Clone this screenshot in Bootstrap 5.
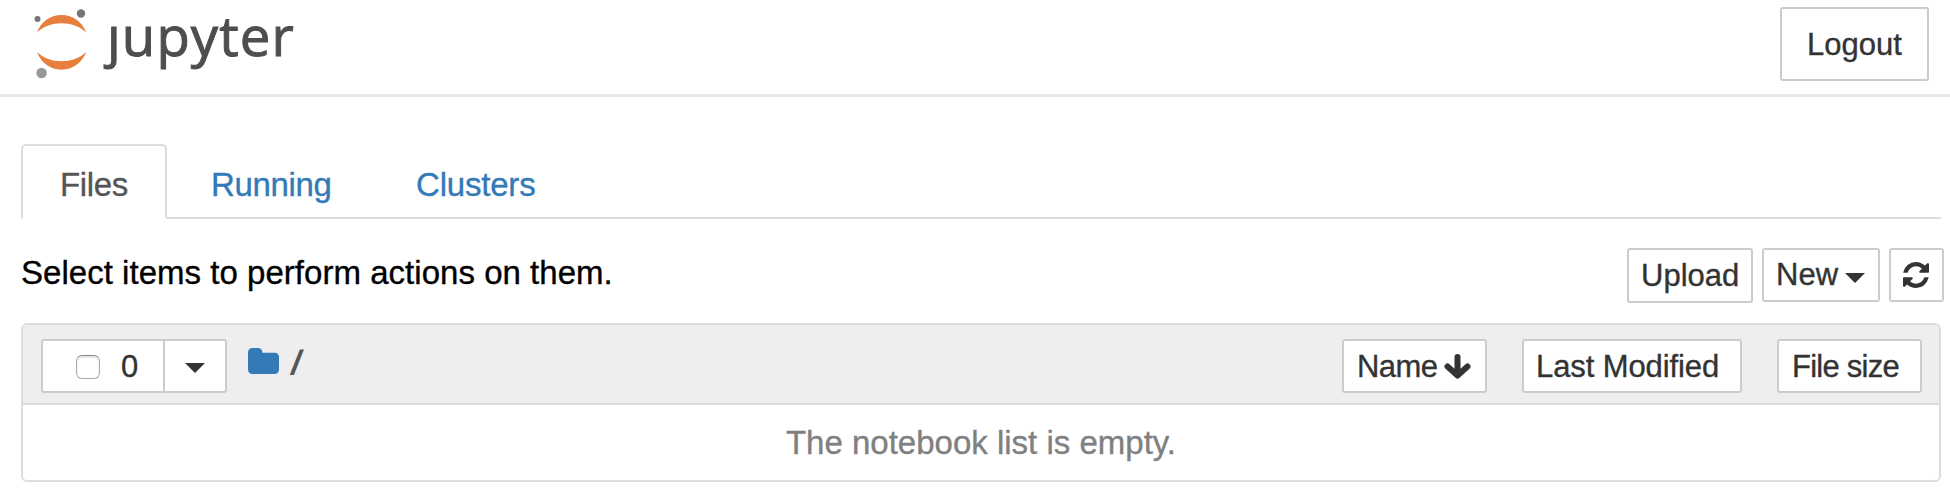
<!DOCTYPE html>
<html lang="en">
<head>
<meta charset="utf-8">
<title>Jupyter</title>
<link href="https://cdn.jsdelivr.net/npm/bootstrap@5.3.0/dist/css/bootstrap.min.css" rel="stylesheet">
<style>
body{font-family:"Liberation Sans",Arial,sans-serif;font-size:33px;line-height:46px;color:#000;background:#fff;overflow:hidden;-webkit-text-stroke:.35px currentColor}
.topbar{height:97px;border-bottom:3px solid #e7e7e7;padding:7px 21px 0 34px}
.logo-mark{width:54px;height:72px;flex:none}
.wordmark{font-family:"Open Sans","Noto Sans",sans-serif;font-size:54.5px;line-height:60px;letter-spacing:1.1px;-webkit-text-stroke:1px #4e4e4e;color:#4e4e4e;margin:-2px 0 0 19px;height:60px}
.wordmark span{display:inline-block}
.wordmark .dotless{clip-path:inset(20px -10px -10px -20px)}
.btn-nb{--bs-btn-color:#333;--bs-btn-bg:#fff;--bs-btn-border-color:#ccc;--bs-btn-border-width:2px;--bs-btn-border-radius:3px;--bs-btn-font-size:31px;--bs-btn-line-height:46px;--bs-btn-padding-y:2px;--bs-btn-padding-x:0;height:54px;text-align:left;white-space:nowrap;flex:none}
.btn-logout{width:149px;height:74px;padding:1px 0 0 25px}
.list-head .btn-nb{--bs-btn-padding-y:3px}
.tabs-nb{--bs-nav-tabs-border-width:2px;--bs-nav-tabs-border-color:#ddd;--bs-nav-tabs-border-radius:5px;--bs-nav-tabs-link-active-color:#555;--bs-nav-tabs-link-active-border-color:#ddd #ddd #fff;--bs-nav-link-color:#337ab7;--bs-nav-link-padding-x:0;--bs-nav-link-padding-y:0;margin:47px 9px 0 21px;height:75px}
.tabs-nb .nav-link{height:75px;padding:16px 0 0 37px;margin-bottom:-2px;letter-spacing:-.35px}
.toolbar-nb{padding:29px 6px 0 21px;height:104px}
.select-text{padding-top:2px;letter-spacing:.03px}
.caret-nb{display:inline-block;border:10px solid transparent;border-top-color:#333;border-bottom:0}
.list-nb{margin:0 9px 0 21px;height:159px;border:2px solid #ddd;border-radius:6px;overflow:hidden}
.list-head{height:80px;background:#eee;border-bottom:2px solid #ddd;padding:14px 17px 0 18px}
.check-nb{width:24px;height:24px;border:1px solid #aaa;border-top-color:#888;border-radius:6px;background:#fff;box-shadow:inset 0 2px 2px #e4e4e4;flex:none}
.slash{color:#555;line-height:46px;display:inline-block;transform:skewX(-7deg);-webkit-text-stroke:1.4px #555}
.empty{color:#808080;text-align:center;line-height:76px}
</style>
</head>
<body>
<header class="topbar d-flex align-items-start">
  <svg class="logo-mark" viewBox="34 7 54 72" aria-hidden="true">
    <g fill="#e67e3c"><path d="M37 32.500C41 22 50 15 61.500 15S82 22 86.300 32.500C79 26 71 23.200 61.500 23.200S44 26 37 32.500Z"/><path d="M37 52C41 62.500 50 69.700 61.500 69.700S82 62.500 86.300 52C79 58.500 71 61.200 61.500 61.200S44 58.500 37 52Z"/></g>
    <circle cx="37.500" cy="19" r="3" fill="#767676"/><circle cx="81" cy="13.500" r="4.200" fill="#767676"/><circle cx="41.600" cy="73" r="5.200" fill="#989898"/>
  </svg>
  <div class="wordmark"><span class="dotless">j</span><span>u</span><span>p</span><span>y</span><span>t</span><span>e</span><span>r</span></div>
  <button class="btn btn-nb btn-logout ms-auto">Logout</button>
</header>
<ul class="nav nav-tabs tabs-nb flex-nowrap">
  <li class="nav-item" style="width:146px"><a class="nav-link active" href="#">Files</a></li>
  <li class="nav-item" style="width:205px"><a class="nav-link" style="padding-left:42px" href="#">Running</a></li>
  <li class="nav-item"><a class="nav-link" style="padding-left:42px;letter-spacing:-.2px" href="#">Clusters</a></li>
</ul>
<div class="toolbar-nb d-flex align-items-start">
  <div class="select-text">Select items to perform actions on them.</div>
  <button class="btn btn-nb ms-auto" style="width:126px;height:55px;padding-left:12px">Upload</button>
  <button class="btn btn-nb d-flex align-items-center" style="width:118px;margin-left:9px;padding-left:12px">New<i class="caret-nb" style="margin-left:7px;margin-top:5px"></i></button>
  <button class="btn btn-nb d-flex align-items-center justify-content-center" style="width:55px;margin-left:9px;padding-right:1px" aria-label="Refresh"><svg width="26" height="26" viewBox="0 0 1536 1536" fill="#333"><path d="M1511 928q0 5-1 7-64 268-268 434.500t-478 166.500q-146 0-282.500-55t-243.500-157l-129 129q-19 19-45 19t-45-19-19-45v-448q0-26 19-45t45-19h448q26 0 45 19t19 45-19 45l-137 137q71 66 161 102t187 36q134 0 250-65t186-179q11-17 53-117 8-23 30-23h192q13 0 22.500 9.500t9.500 22.500zm25-800v448q0 26-19 45t-45 19h-448q-26 0-45-19t-19-45 19-45l138-138q-148-137-349-137-134 0-250 65t-186 179q-11 17-53 117-8 23-30 23h-199q-13 0-22.500-9.500t-9.500-22.500v-7q65-268 270-434.500t480-166.500q146 0 284 55.500t245 156.500l130-129q19-19 45-19t45 19 19 45z"/></svg></button>
</div>
<main class="list-nb">
  <div class="list-head d-flex align-items-start">
    <div class="btn-group flex-shrink-0">
      <button class="btn btn-nb d-flex align-items-center flex-grow-0" style="width:124px;padding-left:33px"><span class="check-nb" style="margin-top:2px"></span><span style="margin:2px 0 0 21px">0</span></button>
      <button class="btn btn-nb d-flex align-items-center flex-grow-0" style="width:64px;padding-left:20px;margin-left:-2px" aria-label="Select"><i class="caret-nb" style="margin-top:4px"></i></button>
    </div>
    <svg style="margin:9px 0 0 21px" width="31" height="26" viewBox="0 128 1664 1408" preserveAspectRatio="none" fill="#337ab7"><path d="M1664 608v704q0 92-66 158t-158 66h-1216q-92 0-158-66t-66-158v-960q0-92 66-158t158-66h320q92 0 158 66t66 158v32h672q92 0 158 66t66 158z"/></svg>
    <span class="slash" style="margin:1px 0 0 13px">/</span>
    <button class="btn btn-nb d-flex align-items-start ms-auto" style="width:145px;padding-left:13px;letter-spacing:-.6px">Name<svg style="margin:9px 0 0 7px" width="27" height="27" viewBox="0 0 27 27" fill="none" stroke="#333" stroke-width="6" stroke-linecap="round"><path d="M13.500 4v17M3.500 13.500l10 9 10-9" stroke-linejoin="round"/></svg></button>
    <button class="btn btn-nb" style="width:220px;margin-left:35px;padding-left:12px;letter-spacing:-.1px">Last Modified</button>
    <button class="btn btn-nb" style="width:145px;margin-left:35px;padding-left:13px;letter-spacing:-.75px">File size</button>
  </div>
  <div class="empty">The notebook list is empty.</div>
</main>
<script src="https://cdn.jsdelivr.net/npm/bootstrap@5.3.0/dist/js/bootstrap.bundle.min.js"></script>
</body>
</html>
